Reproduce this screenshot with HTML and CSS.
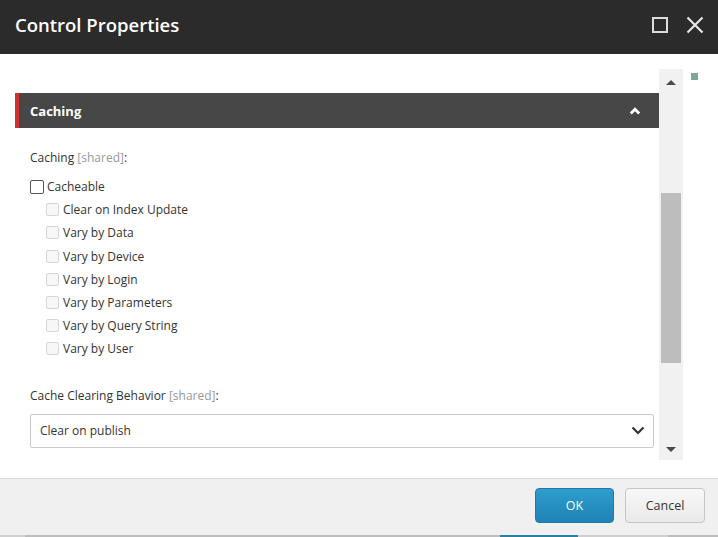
FILE: index.html
```html
<!DOCTYPE html>
<html>
<head>
<meta charset="utf-8">
<link rel="stylesheet" href="styles.css">
</head>
<body>
<div class="dialog">
  <div class="titlebar">
    <div class="title">Control Properties</div>
    <div class="winbtns">
      <svg class="wbtn" width="18" height="18" viewBox="0 0 18 18"><rect x="2" y="2" width="14" height="14" fill="none" stroke="#dcdcdc" stroke-width="2"/></svg>
      <svg class="wbtn" width="18" height="18" viewBox="0 0 18 18"><path d="M1.5 1.5 L16.5 16.5 M16.5 1.5 L1.5 16.5" stroke="#e6e6e6" stroke-width="2.2" fill="none"/></svg>
    </div>
  </div>
  <div class="body">
    <div class="main">
      <div class="section-head">
        <span>Caching</span>
        <svg width="12" height="8" viewBox="0 0 12 8"><path d="M1.8 6.5 L6 2.3 L10.2 6.5" stroke="#fff" stroke-width="2.8" fill="none"/></svg>
      </div>
      <div class="section-body">
        <div class="label">Caching <span class="muted">[shared]</span>:</div>
        <div class="row main-row"><span class="cb"></span>Cacheable</div>
        <div class="row sub"><span class="cb dis"></span>Clear on Index Update</div>
        <div class="row sub"><span class="cb dis"></span>Vary by Data</div>
        <div class="row sub"><span class="cb dis"></span>Vary by Device</div>
        <div class="row sub"><span class="cb dis"></span>Vary by Login</div>
        <div class="row sub"><span class="cb dis"></span>Vary by Parameters</div>
        <div class="row sub"><span class="cb dis"></span>Vary by Query String</div>
        <div class="row sub"><span class="cb dis"></span>Vary by User</div>
        <div class="label label2">Cache Clearing Behavior <span class="muted">[shared]</span>:</div>
        <div class="select">
          <span>Clear on publish</span>
          <svg width="14" height="9" viewBox="0 0 14 9"><path d="M1.5 1.5 L7 7 L12.5 1.5" stroke="#333" stroke-width="2.2" fill="none"/></svg>
        </div>
      </div>
    </div>
    <div class="scrollbar">
      <div class="arrow up"></div>
      <div class="track"><div class="thumb"></div></div>
      <div class="arrow down"></div>
    </div>
    <div class="side"><div class="dot"></div></div>
  </div>
  <div class="footer">
    <button class="btn ok">OK</button>
    <button class="btn cancel">Cancel</button>
  </div>
  <div class="strip"><div class="s1"></div><div class="s2"></div><div class="s3"></div><div class="s4"></div><div class="s5"></div></div>
</div>
</body>
</html>
```
FILE: styles.css
```css
* { box-sizing: border-box; }
html, body { margin: 0; padding: 0; }
body { font-family: "Open Sans", "Noto Sans", sans-serif; color: #333; background: #fff; }
.dialog { width: 718px; height: 537px; display: flex; flex-direction: column; overflow: hidden; }
.titlebar { height: 54px; background: #2b2b2b; display: flex; align-items: center; justify-content: space-between; padding: 0 14px 6px 15px; }
.title { color: #fff; font-size: 18.5px; font-weight: 600; }
.winbtns { display: flex; gap: 17px; align-items: center; padding-top: 2px; }
.wbtn { display: block; }
.body { flex: 1; display: flex; padding: 15px 0 0 15px; background: #fff; }
.main { width: 644px; padding-top: 24px; }
.section-head { height: 35px; background: #474747; border-left: 4px solid #d1302c; display: flex; align-items: center; justify-content: space-between; padding: 0 18px 0 11px; color: #fff; font-size: 13px; font-weight: 700; }
.section-head svg { display: block; }
.section-body { padding: 21px 5px 0 15px; font-size: 12px; }
.label { line-height: 18px; height: 18px; }
.muted { color: #999; }
.row { display: flex; align-items: center; height: 23.2px; }
.main-row { margin-top: 8px; }
.cb { width: 14px; height: 14px; border: 1px solid #555; border-radius: 2px; background: #fff; margin-right: 3px; }
.sub { padding-left: 16px; }
.cb.dis { width: 13px; height: 13px; border-color: #d6d6d6; background: #f7f7f7; margin-right: 4px; }
.label2 { margin-top: 26px; }
.select { margin-top: 9px; height: 34px; border: 1px solid #c9c9c9; border-radius: 2px; display: flex; align-items: center; justify-content: space-between; padding: 0 8px 0 9px; font-size: 12px; }
.select svg { display: block; }
.scrollbar { width: 24px; height: 391px; background: #f1f1f1; display: flex; flex-direction: column; align-items: center; }
.arrow { width: 0; height: 0; border-left: 5px solid transparent; border-right: 5px solid transparent; }
.arrow.up { border-bottom: 5px solid #4a4a4a; margin-top: 11px; }
.arrow.down { border-top: 5px solid #4a4a4a; margin-bottom: 8px; }
.track { flex: 1; width: 100%; padding: 108px 2px 0 2px; }
.thumb { height: 170px; background: #bdbdbd; }
.side { padding: 4px 0 0 8px; }
.dot { width: 7px; height: 7px; background: #7aa99a; }
.footer { height: 57px; background: #f0f0f0; border-top: 1px solid #dcdcdc; display: flex; justify-content: flex-end; gap: 11px; padding: 9px 13px 0 0; }
.btn { height: 35px; border-radius: 4px; font-family: "Open Sans", sans-serif; font-size: 12.5px; }
.ok { width: 79px; background: linear-gradient(#2f9ccf, #1f83b4); border: 1px solid #1e7aa8; color: #fff; }
.cancel { width: 80px; background: linear-gradient(#f8f8f8, #e9e9e9); border: 1px solid #c6c6c6; color: #333; }
.strip { height: 2px; display: flex; background: #bcbcbc; }
.strip div { height: 2px; }
.s1 { width: 25px; background: #d0d0d0; }
.s2 { width: 475px; background: #bdbdbd; }
.s3 { width: 78px; background: #2e7ea3; }
.s4 { width: 90px; background: #cfcfcf; }
.s5 { flex: 1; background: #bdbdbd; }
```
